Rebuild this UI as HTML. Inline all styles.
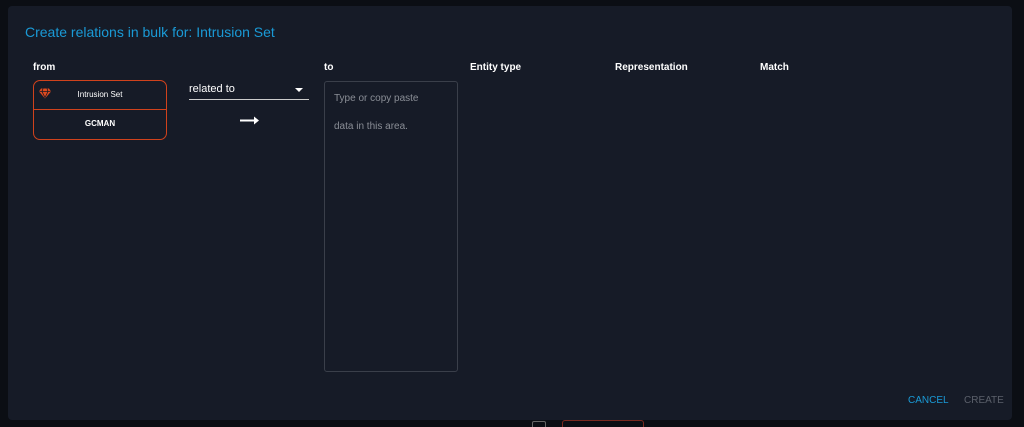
<!DOCTYPE html>
<html><head><style>
html,body{margin:0;width:1024px;height:427px;overflow:hidden}
body{background:#0b0e14;font-family:"Liberation Sans",sans-serif;position:relative}
.dlg{position:absolute;left:8px;top:6px;width:1004px;height:414px;background:#161b27;border-radius:4px}
.t{position:absolute;font-size:10px;color:#fff;font-weight:bold}
</style></head><body>
<div style="position:absolute;left:532px;top:421px;width:12px;height:8px;border:1px solid #666;border-radius:2px"></div>
<div style="position:absolute;left:562px;top:420px;width:80px;height:10px;border:1px solid #7a2a20;border-radius:3px"></div>
<div class="dlg">
<div style="position:absolute;left:17px;top:18px;font-size:14px;color:#1a9ad6">Create relations in bulk for: Intrusion Set</div>
<div class="t" style="left:25px;top:56px">from</div>
<div style="position:absolute;left:25px;top:74px;width:132px;height:58px;border:1px solid #d0421c;border-radius:7px">
 <div style="height:28px;border-bottom:1px solid #d0421c;position:relative">
  <svg style="position:absolute;left:5px;top:7px" width="12" height="11" viewBox="0 0 12 11"><path d="M2 0.5h8l2 3-6 7-6-7z" fill="#e04a1f"/><path d="M0.5 3.5h11M4 0.5l-1 3 3 6 3-6-1-3" stroke="#161b27" stroke-width="0.8" fill="none"/></svg>
  <div style="position:absolute;left:0;right:0;top:9px;text-align:center;font-size:8px;color:#fff">Intrusion Set</div>
 </div>
 <div style="text-align:center;font-size:8px;color:#fff;font-weight:bold;margin-top:9px">GCMAN</div>
</div>
<div style="position:absolute;left:181px;top:77px;font-size:11px;color:#fff">related to</div>
<div style="position:absolute;left:287px;top:82px;border-left:4px solid transparent;border-right:4px solid transparent;border-top:4px solid #fff"></div>
<div style="position:absolute;left:181px;top:93px;width:120px;height:1px;background:#ccc"></div>
<svg style="position:absolute;left:232px;top:110px" width="20" height="9" viewBox="0 0 20 9"><path d="M0 4.5h15" stroke="#fff" stroke-width="2"/><path d="M14 0.5l5 4-5 4z" fill="#fff"/></svg>
<div class="t" style="left:316px;top:56px">to</div>
<div style="position:absolute;left:316px;top:75px;width:132px;height:289px;border:1px solid #3a3f4a;border-radius:3px"></div>
<div style="position:absolute;left:326px;top:87px;font-size:10px;color:#8a8e96">Type or copy paste</div>
<div style="position:absolute;left:326px;top:115px;font-size:10px;color:#8a8e96">data in this area.</div>
<div class="t" style="left:462px;top:56px">Entity type</div>
<div class="t" style="left:607px;top:56px">Representation</div>
<div class="t" style="left:752px;top:56px">Match</div>
<div style="position:absolute;left:900px;top:389px;font-size:10px;color:#1a9ad6">CANCEL</div>
<div style="position:absolute;left:956px;top:389px;font-size:10px;color:#5b606a">CREATE</div>
</div>
</body></html>
